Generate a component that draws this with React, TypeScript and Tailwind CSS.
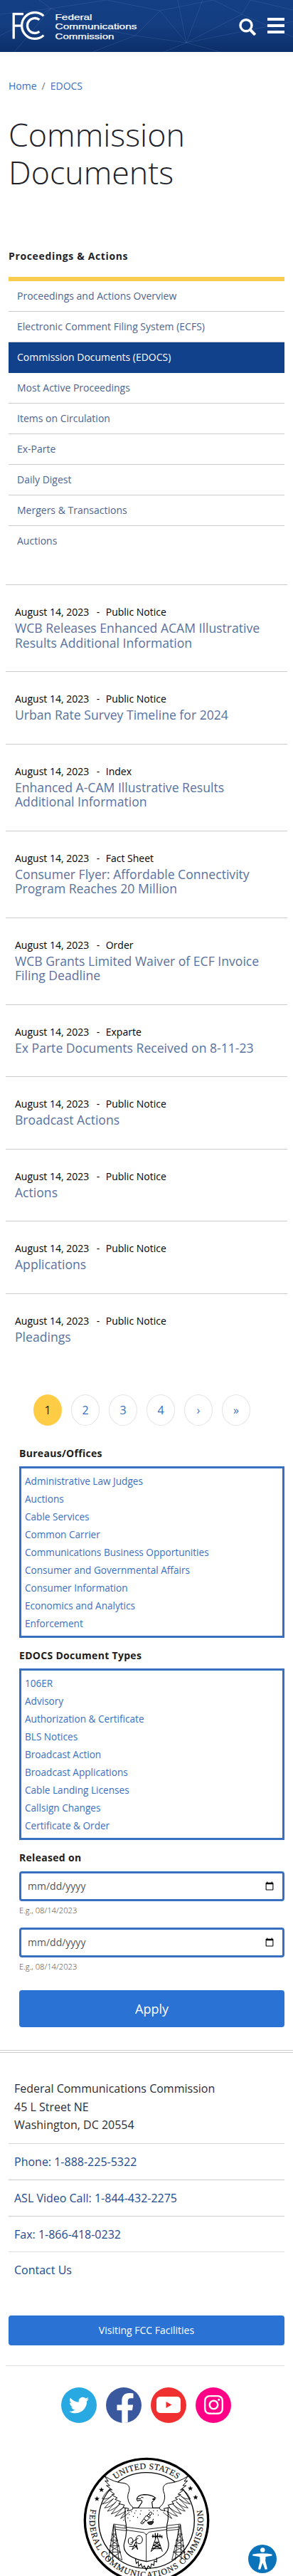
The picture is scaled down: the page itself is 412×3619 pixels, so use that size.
import React from "react";
import { FaTwitter, FaFacebookF, FaInstagram } from "react-icons/fa";

const navItems = [
  "Proceedings and Actions Overview",
  "Electronic Comment Filing System (ECFS)",
  "Commission Documents (EDOCS)",
  "Most Active Proceedings",
  "Items on Circulation",
  "Ex-Parte",
  "Daily Digest",
  "Mergers & Transactions",
  "Auctions",
];

const documents = [
  { type: "Public Notice", lines: ["WCB Releases Enhanced ACAM Illustrative", "Results Additional Information"] },
  { type: "Public Notice", lines: ["Urban Rate Survey Timeline for 2024"] },
  { type: "Index", lines: ["Enhanced A-CAM Illustrative Results", "Additional Information"] },
  { type: "Fact Sheet", lines: ["Consumer Flyer: Affordable Connectivity", "Program Reaches 20 Million"] },
  { type: "Order", lines: ["WCB Grants Limited Waiver of ECF Invoice", "Filing Deadline"] },
  { type: "Exparte", lines: ["Ex Parte Documents Received on 8-11-23"] },
  { type: "Public Notice", lines: ["Broadcast Actions"] },
  { type: "Public Notice", lines: ["Actions"] },
  { type: "Public Notice", lines: ["Applications"] },
  { type: "Public Notice", lines: ["Pleadings"] },
];

const bureaus = [
  "Administrative Law Judges",
  "Auctions",
  "Cable Services",
  "Common Carrier",
  "Communications Business Opportunities",
  "Consumer and Governmental Affairs",
  "Consumer Information",
  "Economics and Analytics",
  "Enforcement",
];

const documentTypes = [
  "106ER",
  "Advisory",
  "Authorization & Certificate",
  "BLS Notices",
  "Broadcast Action",
  "Broadcast Applications",
  "Cable Landing Licenses",
  "Callsign Changes",
  "Certificate & Order",
];

function Logo() {
  return (
    <svg className="h-[44px] w-[180px]" viewBox="0 0 180 44" role="img" aria-label="FCC">
      <g fill="none" stroke="#fff" strokeWidth="3.3">
        <path d="M3.2 38.5V3.6H17M3.2 20.2H13.5" />
        <path d="M45.4 6.4A18.4 18.4 0 1 0 45.4 33.6" />
        <path d="M39.4 11.7A10.5 10.5 0 1 0 39.4 28.3" />
      </g>
      <g fill="#fff" fontFamily="Liberation Sans" fontSize="11.8" stroke="#fff" strokeWidth=".25">
        <text x="61.5" y="11.8" textLength="52" lengthAdjust="spacingAndGlyphs">Federal</text>
        <text x="61.5" y="25.2" textLength="115" lengthAdjust="spacingAndGlyphs">Communications</text>
        <text x="61.5" y="38.6" textLength="83" lengthAdjust="spacingAndGlyphs">Commission</text>
      </g>
    </svg>
  );
}

function Header() {
  return (
    <header className="relative h-[73px] overflow-hidden bg-linear-to-b from-[#143f84] via-[#133d80] to-[#0d2f69]">
      <svg className="absolute inset-0 h-full w-full" viewBox="0 0 412 73" fill="none" stroke="#6b8fc7" strokeOpacity=".2">
        <path d="M55 0L72 12L20 73M150 0L225 15L300 0M225 15L190 50L130 73M225 15L262 60L340 20L412 52M262 60L250 0M262 60L285 0M262 60L412 30M190 50L262 60L230 73M262 60L310 73M340 20L352 0M340 20L300 0M0 20L72 12L150 0M352 0L412 14M0 50L40 30L72 12L140 40L190 50" />
      </svg>
      <div className="relative flex h-full items-start pl-4 pt-4">
        <Logo />
        <svg className="ml-[140px] mt-[10px] h-6 w-6" viewBox="0 0 24 24" fill="none" stroke="#fff">
          <circle cx="10" cy="9.7" r="8" strokeWidth="3.4" />
          <path d="M15.5 15.5L22.8 23" strokeWidth="4" />
        </svg>
        <div className="ml-4 mt-[9px] flex flex-col gap-[5px]">
          <span className="h-1 w-6 bg-white" />
          <span className="h-1 w-6 bg-white" />
          <span className="h-1 w-6 bg-white" />
        </div>
      </div>
    </header>
  );
}

function SelectBox({ label, options }: { label: string; options: string[] }) {
  return (
    <div>
      <div className="h-7 text-sm leading-5 font-bold tracking-[0.3px] text-[#1c1c1c]">{label}</div>
      <ul className="h-[241px] border-3 border-[#386fc1] px-[5px] pt-[5px]">
        {options.map((o) => (
          <li key={o} className="h-[25px] text-[13.6px] leading-[25px] text-[#386fc1]">{o}</li>
        ))}
      </ul>
    </div>
  );
}

function DateField() {
  return (
    <div className="h-[79px]">
      <input
        type="date"
        className="block h-[42px] w-full rounded border-3 border-[#386fc1] px-[9px] text-sm text-[#555] [&::-webkit-datetime-edit-day-field]:p-0 [&::-webkit-datetime-edit-month-field]:p-0 [&::-webkit-datetime-edit-year-field]:p-0"
      />
      <div className="mt-1 text-[11.2px] leading-[18px] font-light text-[#444]">E.g., 08/14/2023</div>
    </div>
  );
}

function Star({ x, y }: { x: number; y: number }) {
  return (
    <path
      transform={`translate(${x} ${y})`}
      fill="#000"
      d="M0-10L2.6-3.2L9.6-3L4 1.2L6 8L0 4L-6 8L-4 1.2L-9.6-3L-2.6-3.2Z"
    />
  );
}

function Wing() {
  return (
    <g fill="#fff">
      <path d="M440 508L456 530L442 528L462 548L448 548L472 566L458 566L482 584L470 587L494 600L484 606L508 616L500 624L524 630L518 640L542 645L536 655L556 650Q566 640 548 628Q530 600 544 570Q550 545 524 538Q480 535 440 508Z" strokeWidth="3" />
      <path d="M462 563Q440 580 430 604Q450 608 470 592Q450 608 430 626Q455 622 478 603Q455 625 440 642Q465 640 490 615Q465 640 452 656Q480 650 505 625Q485 645 468 668Q495 660 520 640Q500 660 484 678Q505 672 530 655L508 687Q530 675 545 660" fill="none" strokeWidth="2.4" />
    </g>
  );
}

function Mast() {
  return (
    <path d="M478 712L456 862M478 712L514 862M484 712L500 862M478 712L474 862M470 752H488M466 778H496M462 802H502M458 828H508M470 752L496 778L462 802L508 828L458 862M488 752L466 778L502 802L458 828L514 862" fill="none" strokeWidth="2.4" />
  );
}

function Seal() {
  return (
    <svg className="mx-auto block h-[178px] w-[178px]" viewBox="350 428 534 534" stroke="#000" fill="none">
      <defs>
        <path id="seal-top" d="M400 695A217 217 0 0 1 834 695" />
        <path id="seal-bottom" d="M391.5 612.9A240 240 0 1 0 842.5 612.9" />
      </defs>
      <circle cx="617" cy="695" r="260" strokeWidth="10" fill="#fff" />
      <circle cx="617" cy="695" r="202" strokeWidth="4" />
      <g fill="#111" stroke="#111" strokeWidth=".5" fontFamily="Liberation Serif" fontSize="36">
        <text letterSpacing="1">
          <textPath href="#seal-top" startOffset="50%" textAnchor="middle">UNITED STATES</textPath>
        </text>
        <text letterSpacing="3.4">
          <textPath href="#seal-bottom" startOffset="50%" textAnchor="middle">FEDERAL COMMUNICATIONS COMMISSION</textPath>
        </text>
      </g>
      <Star x={427} y={566} />
      <Star x={408} y={604} />
      <Star x={802} y={560} />
      <Star x={824} y={598} />
      <Mast />
      <g transform="matrix(-1 0 0 1 1238 0)"><Mast /></g>
      <path d="M478 710L610 728L760 710M484 722L608 740L756 722M486 732L606 748M628 746L754 732" strokeWidth="2.4" />
      <path d="M527 690V642H708V690Q695 740 710 790Q716 850 617 868Q515 850 522 795Q540 740 527 690Z" strokeWidth="3.4" fill="#fff" />
      <path d="M523 722L610 733L704 722M530 735L606 746L616 755L628 744L702 733M616 752V866" strokeWidth="2.6" />
      <Wing />
      <g transform="matrix(-1 0 0 1 1232 0)"><Wing /></g>
      <path d="M582 642L598 618Q600 608 586 610Q578 618 576 604Q580 588 606 586Q640 586 655 600L642 606L652 606L640 618L643 642" strokeWidth="3.4" fill="#fff" />
      <path d="M578 604L594 603M594 597L604 599" strokeWidth="3" />
      <path d="M552 658h3m16-4h3m18 0h3m-52 16h3m20-6h3m20 4h3m-55 16h3m20-6h3m15 4h3m-35 14h3m-30-2h3m105-42h3m15 2h3m13 0h3m-20 14h3m18 4h3m-55 4h3m15 6h3m10 8h3m-30 6h3m22-2h3m-8 8h3" strokeWidth="4" />
      <path d="M592 706L606 688L614 694L600 710ZM620 675L634 658L641 664L627 681ZM606 686L618 674L630 684L616 698ZM598 700l8 6M626 668l8 6" strokeWidth="3" fill="#fff" />
      <path d="M622 702Q622 714 638 712Q648 706 646 698Z" strokeWidth="3" fill="#333" />
      <g strokeWidth="3">
        <ellipse cx="550" cy="782" rx="10" ry="14" />
        <ellipse cx="586" cy="776" rx="14" ry="17" />
        <path d="M572 785L556 818M572 785L580 818M562 802H578M566 796L580 818M550 790L582 770M556 818L576 802M544 804h18" />
        <path d="M660 758L636 826M660 758L684 826M650 786H670M646 800H676M640 814H680M650 786L676 800L640 814M670 786L646 800L680 814L660 804L636 826" />
        <path d="M640 762H684M644 754v14M654 748v22M664 748v22M674 754v14M682 758v12" strokeWidth="4" />
      </g>
      <path d="M570 856L574 876L582 868L584 888L594 878L600 894L608 886L616 904L624 886L634 896L638 878L648 884L650 866L660 870L660 852" strokeWidth="3.2" />
    </svg>
  );
}

function AccessibilityButton() {
  return (
    <svg className="absolute right-[23px] bottom-[4px] h-10 w-10" viewBox="0 0 40 40" fill="#fff">
      <circle cx="20" cy="20" r="20" fill="#0b73b9" />
      <circle cx="20.3" cy="7.4" r="3.2" />
      <path d="M6.3 13.6Q20 10.8 33.5 13.6V15.4L24.5 17L24.2 23L27 34.3L23.8 35L20.3 25.5L17 35L13.9 34.3L16.6 23L16.2 17L6.3 15.4Z" />
    </svg>
  );
}

export default function App() {
  return (
    <div className="relative h-[3619px] w-[412px] overflow-hidden bg-white font-['Open_Sans',sans-serif] text-[#1d1f2b]">
      <Header />
      <nav className="mt-[38px] flex h-5 gap-[7px] pl-3 text-sm leading-5 text-[#386fc1]">
        <a>Home</a>
        <span className="text-[#777]">/</span>
        <a>EDOCS</a>
      </nav>
      <h1 className="mt-[31px] px-3 text-[44.8px] leading-[53px] font-light text-[#1d1f2b]">
        Commission
        <br />
        Documents
      </h1>
      <h2 className="mt-[82px] pl-3 text-sm leading-5 font-bold tracking-[0.65px]">Proceedings &amp; Actions</h2>
      <ul className="mx-3 mt-[19px] border-t-6 border-[#ffcc50]">
        {navItems.map((item, i) => (
          <li
            key={item}
            className={
              i === 2
                ? "h-[43px] border-b border-[#143f84] bg-[#12418c] pl-3 text-sm leading-[42px] text-white"
                : i === 8
                  ? "h-[43px] pl-3 text-sm leading-[42px] text-[#4d6490]"
                  : "h-[43px] border-b border-[#ccc] pl-3 text-sm leading-[42px] text-[#4d6490]"
            }
          >
            {item}
          </li>
        ))}
      </ul>
      <section className="mx-2 mt-[39px]">
        {documents.map((d, i) => (
          <article
            key={i}
            className={
              d.lines.length > 1
                ? "h-[122px] border-t border-[#ccc] px-[13px] pt-[28px]"
                : "h-[101.6px] border-t border-[#ccc] px-[13px] pt-[28px]"
            }
          >
            <div className="flex h-[22px] text-sm leading-5 text-black">
              <span>August 14, 2023</span>
              <span className="mr-[8.5px] ml-[10.5px]">-</span>
              <span>{d.type}</span>
            </div>
            <h3 className="text-[17.6px] leading-[20.6px] text-[#5872a0]">
              {d.lines.map((l) => (
                <span key={l} className="block whitespace-nowrap">{l}</span>
              ))}
            </h3>
          </article>
        ))}
      </section>
      <div className="mt-[40.4px] ml-[47px] flex gap-[13px]">
        {["1", "2", "3", "4", "›", "»"].map((p, i) => (
          <span
            key={p}
            className={
              i === 0
                ? "flex h-11 w-10 items-center justify-center rounded-[50%] bg-[#ffcc45] text-base text-[#222]"
                : "flex h-11 w-10 items-center justify-center rounded-[50%] border border-[#e4e4e4] text-base text-[#386fc1]"
            }
          >
            {p}
          </span>
        ))}
      </div>
      <form className="mr-3 ml-[27px] pt-[29px]">
        <SelectBox label="Bureaus/Offices" options={bureaus} />
        <div className="h-[15px]" />
        <SelectBox label="EDOCS Document Types" options={documentTypes} />
        <div className="mt-[15px] h-[29px] text-sm leading-5 font-bold tracking-[0.3px] text-[#1c1c1c]">Released on</div>
        <DateField />
        <DateField />
        <button type="button" className="mt-[9px] block h-[52px] w-full rounded bg-[#2a72d4] text-lg text-white">
          Apply
        </button>
      </form>
      <footer className="mt-8 border-t-4 border-double border-[#ccc] px-3">
        <address className="h-[128px] border-b border-[#d8d8d8] pt-[38px] pl-2 text-base leading-[25.6px] text-[#2c2d36] not-italic">
          Federal Communications Commission
          <br />
          45 L Street NE
          <br />
          Washington, DC 20554
        </address>
        <ul className="pl-0 text-base text-[#1d4a8f]">
          <li className="h-[51px] border-b border-[#ccc] pl-2 leading-[50px]">Phone: 1-888-225-5322</li>
          <li className="h-[51px] border-b border-[#ccc] pl-2 leading-[50px]">ASL Video Call: 1-844-432-2275</li>
          <li className="h-[50px] border-b border-[#ddd] pl-2 leading-[50px]">Fax: 1-866-418-0232</li>
          <li className="h-[51px] pl-2 leading-[50px]">Contact Us</li>
        </ul>
        <button type="button" className="mt-[38px] block h-[42px] w-full rounded bg-[#2a72d4] text-sm text-white">
          Visiting FCC Facilities
        </button>
        <hr className="mt-7 -ml-1 border-[#ddd]" />
        <div className="mt-[30px] ml-[74px] flex gap-[13px]">
          <span className="flex size-[50px] items-center justify-center rounded-full bg-[#29a9e1]">
            <FaTwitter className="size-7 text-white" />
          </span>
          <span className="flex size-[50px] items-end justify-center overflow-hidden rounded-full bg-[#3a589e]">
            <FaFacebookF className="mb-[-1px] ml-1 h-[43px] w-7 text-white" />
          </span>
          <span className="flex size-[50px] items-center justify-center rounded-full bg-[#f03030]">
            <svg className="h-[23px] w-[34px]" viewBox="0 0 34 23">
              <rect width="34" height="23" rx="5" fill="#fff" />
              <path d="M13.5 7L21.5 11.5L13.5 16Z" fill="#f03030" />
            </svg>
          </span>
          <span className="flex size-[50px] items-center justify-center rounded-full bg-[#ff0087]">
            <FaInstagram className="size-[31px] text-white" />
          </span>
        </div>
        <div className="mt-12">
          <Seal />
        </div>
      </footer>
      <AccessibilityButton />
    </div>
  );
}
